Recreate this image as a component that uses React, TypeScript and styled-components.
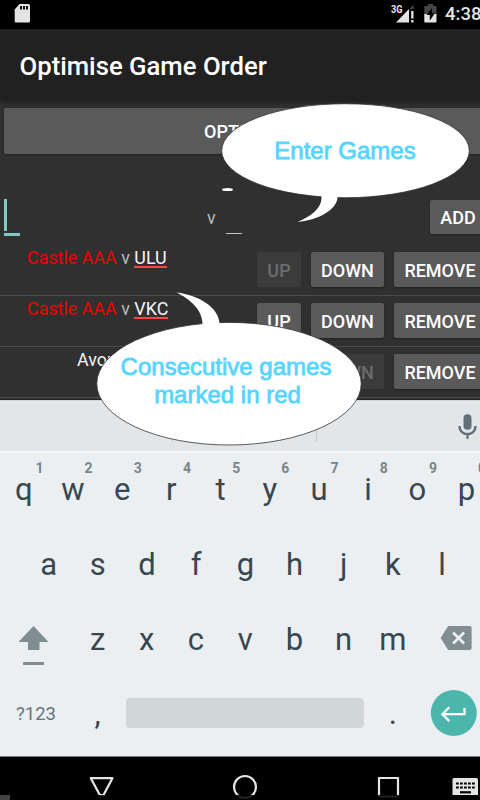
import React from "react";
import styled, { createGlobalStyle } from "styled-components";

const GlobalStyle = createGlobalStyle`
  * { box-sizing: border-box; }
  html, body { margin: 0; padding: 0; background: #000; overflow: hidden; }
  body { font-family: Roboto, sans-serif; }
`;

const Viewport = styled.div`
  position: relative;
  width: 480px;
  height: 800px;
  overflow: hidden;
`;

const Device = styled.div`
  display: flex;
  flex-direction: column;
  width: 493px;
  height: 800px;
`;

const StatusBar = styled.header`
  display: flex;
  height: 29px;
  padding-left: 14px;
  background: #000;
`;

const StatusIcons = styled.div`
  display: flex;
  margin-left: auto;
  width: 102px;
`;

const Clock = styled.span`
  margin-left: -1px;
  color: #e4e4e4;
  font-size: 18.5px;
  font-weight: 500;
  line-height: 29px;
  white-space: nowrap;
`;

const AppBar = styled.div`
  height: 71px;
  padding-left: 19.5px;
  background: #212121;
  box-shadow: 0 1px 5px rgba(0, 0, 0, 0.55);
  color: #fff;
  font-size: 25.7px;
  font-weight: 500;
  line-height: 75px;
  z-index: 1;
`;

const Content = styled.main`
  height: 300px;
  padding-top: 8px;
  background: linear-gradient(#303030 297px, #3f3f3f 298px, #2b2b2b 299px, #222 300px);
`;

const Button = styled.button<{ $w: number; $h?: number; $shift?: number }>`
  flex: none;
  width: ${(p) => p.$w}px;
  height: ${(p) => p.$h ?? 35}px;
  padding: 2px ${(p) => p.$shift ?? 0}px 0 0;
  border: 0;
  border-radius: 2px;
  background: #5a5a5b;
  box-shadow: 0 1px 2px rgba(0, 0, 0, 0.35);
  color: #fff;
  font: 500 18px/1 Roboto, sans-serif;
  text-align: center;
  white-space: nowrap;

  &:disabled {
    background: #3b3b3b;
    box-shadow: none;
    color: #6d6d6d;
  }
`;

const OptimiseRow = styled.div`
  display: flex;
  height: 91px;
  padding-left: 4px;
`;

const EntryRow = styled.div`
  display: flex;
  height: 46px;
  padding-left: 4px;
`;

const FocusedField = styled.div`
  width: 16px;
  height: 37px;
  border-bottom: 3px solid #80cbc4;
`;

const Caret = styled.div`
  width: 3px;
  height: 32px;
  background: #80cbc4;
`;

const EntryVersus = styled.span`
  margin-left: 187px;
  width: 19px;
  color: #b9b9b9;
  font-size: 18px;
  line-height: 37px;
`;

const BlankField = styled.div`
  width: 16px;
  height: 35px;
  border-bottom: 1px solid #c4c4c4;
`;

const AddSlot = styled.div`
  margin: 1px 0 0 188px;
`;

const GameRow = styled.div`
  display: flex;
  height: 51px;
  padding: 7px 0 0;
  border-bottom: 1px solid #4a4a4a;
`;

const GameName = styled.div<{ $indent: number }>`
  flex: none;
  width: 257px;
  padding-left: ${(p) => p.$indent}px;
  color: #f4f4f4;
  font-size: 17.9px;
  line-height: 12px;
  white-space: nowrap;
`;

const Consecutive = styled.span`
  color: #ef0000;
`;

const Versus = styled.span`
  color: #b9b9b9;
`;

const Misspelt = styled.span`
  display: inline-block;
  height: 16px;
  border-bottom: 2px solid #fb4444;
`;

const Actions = styled.div`
  display: flex;
  gap: 10px;
`;

const Keyboard = styled.section`
  height: 357px;
  background: #ebeff2;
  border-bottom: 1px solid #73787a;
`;

const Suggestions = styled.div`
  display: flex;
  height: 53px;
  background: #e3e6e8;
  border-top: 1px solid #d2d4d5;
  border-bottom: 2px solid #f6f7f8;
`;

const SuggestionDivider = styled.div<{ $gap: number }>`
  width: 1px;
  height: 32px;
  margin: 9px 0 0 ${(p) => p.$gap}px;
  background: #c7cccf;
`;

const MicSlot = styled.div`
  display: flex;
  margin: 13px 0 0 140px;
`;

const KeyRow = styled.div<{ $h: number; $indent?: number; $line?: number }>`
  display: flex;
  height: ${(p) => p.$h}px;
  padding-left: ${(p) => p.$indent ?? 0}px;
  line-height: ${(p) => p.$line ?? 76}px;
`;

const Key = styled.div<{ $trail?: number }>`
  position: relative;
  flex: none;
  width: 49.2px;
  padding-right: ${(p) => p.$trail ?? 0}px;
  color: #37474f;
  font-size: 31px;
  text-align: center;
`;

const Hint = styled.span`
  position: absolute;
  left: 35.4px;
  top: 8px;
  color: #78858a;
  font-size: 14px;
  font-weight: 700;
  line-height: 14px;
`;

const IconKey = styled.div<{ $w: number }>`
  display: flex;
  flex: none;
  width: ${(p) => p.$w}px;
`;

const SymbolsKey = styled.div`
  flex: none;
  width: 73px;
  padding-left: 16px;
  color: #65747a;
  font-size: 18.5px;
`;

const SpaceKey = styled.div`
  flex: none;
  width: 238px;
  height: 30px;
  margin: 22px 4px 0;
  border-radius: 4px;
  background: #d1d6d9;
`;

const NavBar = styled.nav`
  display: flex;
  height: 43px;
  background: #000;
`;

const BubbleLayer = styled.svg`
  position: absolute;
  inset: 0;
`;

const BubbleText = styled.div<{ $x: number; $y: number; $w: number }>`
  position: absolute;
  left: ${(p) => p.$x}px;
  top: ${(p) => p.$y}px;
  width: ${(p) => p.$w}px;
  color: #55d5ff;
  font-family: "Liberation Sans", Arial, sans-serif;
  font-size: 24px;
  line-height: 28px;
  text-align: center;
  white-space: nowrap;
  -webkit-text-stroke: 0.8px #55d5ff;
`;

const SecondLine = styled.div`
  padding-left: 3px;
`;

const CornerMark = styled.div`
  align-self: flex-end;
  width: 10px;
  height: 5px;
  background: #424242;
`;

interface Game {
  home: React.ReactNode;
  indent: number;
  canUp: boolean;
  canDown: boolean;
}

const games: Game[] = [
  {
    home: <><Consecutive>Castle AAA</Consecutive> <Versus>v</Versus> <Misspelt>ULU</Misspelt></>,
    indent: 27, canUp: false, canDown: true,
  },
  {
    home: <><Consecutive>Castle AAA</Consecutive> <Versus>v</Versus> <Misspelt>VKC</Misspelt></>,
    indent: 27, canUp: true, canDown: true,
  },
  { home: "Avon", indent: 77, canUp: true, canDown: false },
];

const SdCard = () => (
  <svg width="16" height="28" viewBox="14 0 16 28">
    <path d="M19.5 4H28.5Q30 4 30 5.500V21Q30 22.500 28.500 22.500H16Q14.700 22.500 14.700 21V9.500Z" fill="#e4e4e4" />
    <path d="M20 6h2v3.500h-2zM23 6h2v3.500h-2zM26 6h2v3.500h-2z" fill="#111" />
  </svg>
);

const Signal = () => (
  <svg width="55" height="29" viewBox="391 0 55 29">
    <text x="391" y="12.500" fontSize="10.500" fontWeight="700" fill="#e4e4e4" textLength="11.500" lengthAdjust="spacingAndGlyphs">3G</text>
    <path d="M396 22.500 409 9V22.500Z" fill="#e4e4e4" />
    <path d="M409 9.500 413.500 4.500V9H409Z" fill="#444" />
    <path d="M411.200 11h2.300v7.500h-2.300zM411.200 20h2.300v2.500h-2.300z" fill="#e4e4e4" />
    <path d="M424.300 6.500Q424.300 6 425 6H428V4h5v2h2.700q.8 0 .8.800V14H424.300Z" fill="#464646" />
    <path d="M424.300 14h12.200v7.600q0 .9-.9.900H425.200q-.9 0-.9-.9Z" fill="#e4e4e4" />
    <path d="M432 7.800 426.500 15h3.300v5.700l5-7.400H432Z" fill="#000" />
  </svg>
);

const Mic = () => (
  <svg width="20" height="28" viewBox="457 414 20 28">
    <rect x="463.500" y="414.300" width="8" height="15.500" rx="3.800" fill="#607078" />
    <path d="M459.500 426C459.500 437 475.500 437 475.500 426M467.500 434V438.700" fill="none" stroke="#607078" strokeWidth="2.300" />
  </svg>
);

const Shift = () => (
  <svg width="73" height="74" viewBox="0 602 73 74">
    <path d="M33.500 626 48.500 642H39.500V650H28V642H18.500Z" fill="#808d91" />
    <path d="M23 662h21v3H23z" fill="#808d91" />
  </svg>
);

const Backspace = () => (
  <svg width="70" height="74" viewBox="417.400 602 70 74">
    <path d="M448.500 626H470q2 0 2 2V648q0 2-2 2H448.500L441 638Z" fill="#808d91" />
    <path d="M453.500 632.500 464.500 643.500M464.500 632.500 453.500 643.500" stroke="#ebeff2" strokeWidth="2.600" />
  </svg>
);

const Enter = () => (
  <svg width="62" height="74" viewBox="417.200 676 62 74">
    <circle cx="454" cy="713" r="23" fill="#4db6ac" />
    <path d="M464.700 708V714.200H443M449.500 707.300 442.600 714.200 449.500 721.100" fill="none" stroke="#fff" strokeWidth="2.300" />
  </svg>
);

const NavIcons = () => (
  <svg width="470" height="43" viewBox="10 757 470 43">
    <defs>
      <clipPath id="nav-clip"><rect x="0" y="757" width="480" height="38" /></clipPath>
    </defs>
    <g fill="none" stroke="#202020" strokeWidth="2">
      <path d="M91 778H112.500L103.500 795.500H100Z" />
      <circle cx="245" cy="787" r="11" />
      <rect x="379" y="778" width="19" height="18.500" />
    </g>
    <g clipPath="url(#nav-clip)" fill="none" stroke="#e4e4e4" strokeWidth="2.200" strokeLinejoin="round">
      <path d="M90.800 778.200H112.400L103.500 795H99.800Z" />
      <circle cx="245" cy="787" r="11" />
      <rect x="379" y="778" width="19" height="20" />
      <rect x="452.500" y="778" width="25.500" height="19" rx="1.500" fill="#e4e4e4" stroke="none" />
      <path d="M456 783.500H475M456 787.500H475" stroke="#000" strokeDasharray="2.800 1.200" />
      <path d="M460 792.300H471" stroke="#000" />
    </g>
  </svg>
);

export default function App() {
  return (
    <>
      <GlobalStyle />
      <Viewport>
        <Device>
          <StatusBar>
            <SdCard />
            <StatusIcons><Signal /><Clock>4:38</Clock></StatusIcons>
          </StatusBar>
          <AppBar>Optimise Game Order</AppBar>
          <Content>
            <OptimiseRow><Button $w={485} $h={46} $shift={3}>OPTIMISE</Button></OptimiseRow>
            <EntryRow>
              <FocusedField><Caret /></FocusedField>
              <EntryVersus>v</EntryVersus>
              <BlankField />
              <AddSlot><Button $w={56} $h={34}>ADD</Button></AddSlot>
            </EntryRow>
            {games.map((game, i) => (
              <GameRow key={i}>
                <GameName $indent={game.indent}>{game.home}</GameName>
                <Actions>
                  <Button $w={44} disabled={!game.canUp}>UP</Button>
                  <Button $w={73} disabled={!game.canDown}>DOWN</Button>
                  <Button $w={92}>REMOVE</Button>
                </Actions>
              </GameRow>
            ))}
          </Content>
          <Keyboard>
            <Suggestions>
              <SuggestionDivider $gap={172} />
              <SuggestionDivider $gap={143} />
              <MicSlot><Mic /></MicSlot>
            </Suggestions>
            <KeyRow $h={74} $line={74}>
              {[..."qwertyuiop"].map((k, i) => (
                <Key key={k} $trail={1.6}>{k}<Hint>{(i + 1) % 10}</Hint></Key>
              ))}
            </KeyRow>
            <KeyRow $h={75} $indent={24}>
              {[..."asdfghjkl"].map((k) => <Key key={k}>{k}</Key>)}
            </KeyRow>
            <KeyRow $h={74}>
              <IconKey $w={73}><Shift /></IconKey>
              {[..."zxcvbnm"].map((k) => <Key key={k}>{k}</Key>)}
              <IconKey $w={70}><Backspace /></IconKey>
            </KeyRow>
            <KeyRow $h={74}>
              <SymbolsKey>?123</SymbolsKey>
              <Key>,</Key>
              <SpaceKey />
              <Key>.</Key>
              <IconKey $w={62}><Enter /></IconKey>
            </KeyRow>
          </Keyboard>
          <NavBar><CornerMark /><NavIcons /></NavBar>
        </Device>
        <BubbleLayer width="480" height="800">
          <g fill="#fff" stroke="#333" strokeWidth="0.8">
            <ellipse cx="345.500" cy="150.700" rx="123.800" ry="47" />
            <ellipse cx="229" cy="383.700" rx="132.200" ry="61.300" />
          </g>
          <g fill="#fff">
            <path d="M321.500 194V198C321.500 208 311 216.500 297.500 222C319 220 337.500 209 337.500 197V194Z" />
            <path d="M202.500 328V324C202.500 310 190 299 176.500 292.500C199 295 219.500 308 219.500 324V328Z" />
            <ellipse cx="227.500" cy="189.500" rx="5.500" ry="1.600" />
          </g>
        </BubbleLayer>
        <BubbleText $x={245} $y={137} $w={200}>Enter Games</BubbleText>
        <BubbleText $x={106} $y={353} $w={240}>Consecutive games<SecondLine>marked in red</SecondLine></BubbleText>
      </Viewport>
    </>
  );
}
